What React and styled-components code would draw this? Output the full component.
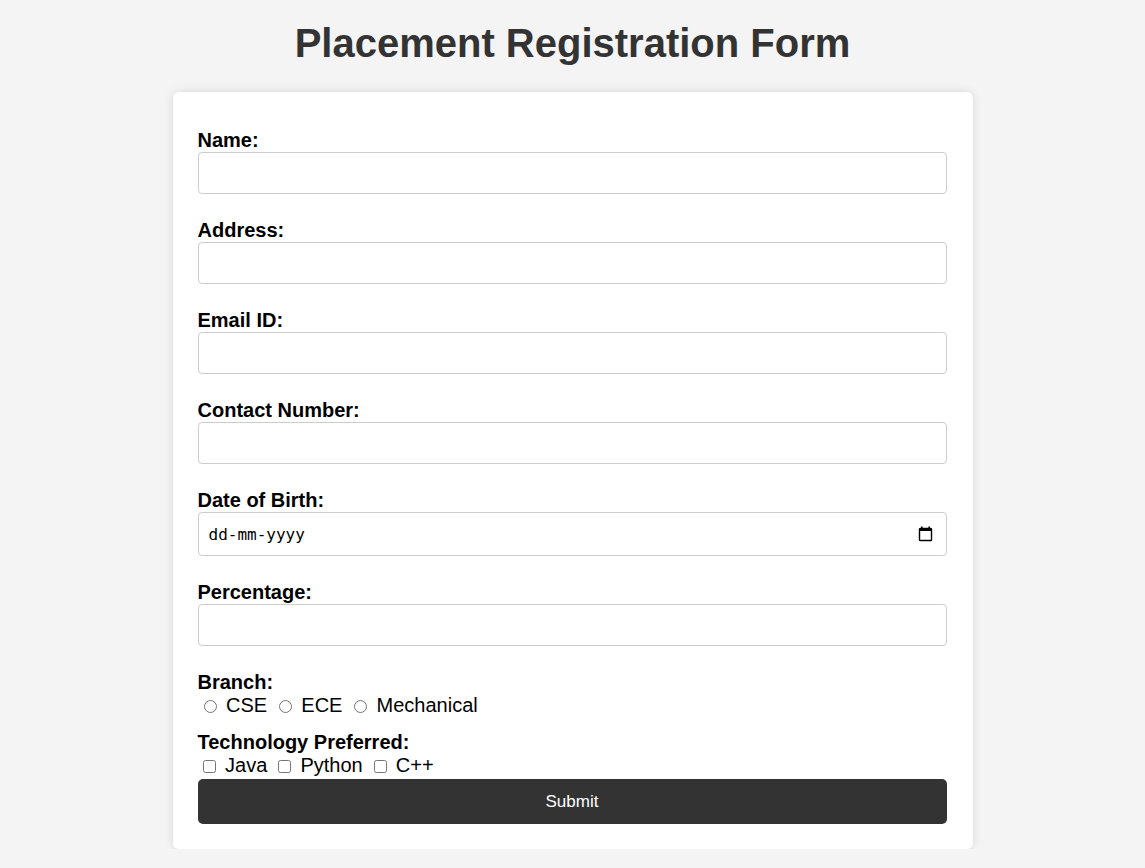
import React from 'react'
import styled, { createGlobalStyle } from 'styled-components'

const GlobalStyle = createGlobalStyle`
body{
  margin:0;
  background-color:#f4f4f4;
  font-family:"Liberation Sans", Arial, sans-serif;
}
`

const Title = styled.h1`
margin:20px 0 26px;
text-align:center;
font-size:40px;
line-height:46px;
font-weight:bold;
color:#333;
`

const Card = styled.form`
display:flex;
flex-direction:column;
width:800px;
box-sizing:border-box;
margin:0 auto;
padding:25px 26px 25px 25px;
background-color:#fff;
border-radius:6px;
box-shadow:0 0 10px rgba(0,0,0,0.12);
`

const Label = styled.label`
display:block;
margin:12px 0 0;
font-size:20px;
line-height:23px;
font-weight:bold;
color:#000;
`

const Input = styled.input`
display:block;
width:100%;
height:42px;
box-sizing:border-box;
margin:0 0 13px;
padding:10px;
border:1px solid #ccc;
border-radius:4px;
font-family:"Liberation Sans", Arial, sans-serif;
font-size:17px;
outline:none;
`

const DateField = styled.div`
display:flex;
align-items:center;
height:44px;
box-sizing:border-box;
margin:0 0 13px;
padding:0 13px 0 10px;
border:1px solid #ccc;
border-radius:4px;
background:#fff;
input{
  flex:1;
  border:none;
  outline:none;
  padding:0;
  font-family:"DejaVu Sans Mono", monospace;
  font-size:16px;
  color:#000;
  &::placeholder{ color:#000; }
}
`

const Options = styled.div`
font-size:20px;
line-height:23px;
height:23px;
margin-bottom:2px;
color:#000;
white-space:pre;
input{
  width:13px;
  height:13px;
  margin:3px ${p => (p.$check ? '3.5px' : '4px')} 0 ${p => (p.$check ? '5.5px' : '6px')};
  vertical-align:-1px;
}
`

const Button = styled.button`
display:block;
width:100%;
height:45px;
border:none;
border-radius:5px;
background-color:#333;
color:#fff;
font-family:"Liberation Sans", Arial, sans-serif;
font-size:17px;
cursor:pointer;
`

const CalendarIcon = () => (
  <svg width="15" height="16" viewBox="0 0 15 16">
    <rect x="3" y="0.5" width="1.6" height="3" fill="#000" />
    <rect x="10.4" y="0.5" width="1.6" height="3" fill="#000" />
    <rect x="1.5" y="2.5" width="12" height="12" fill="none" stroke="#000" strokeWidth="1.4" rx="0.8" />
    <rect x="1.5" y="2.5" width="12" height="2.5" fill="#000" />
  </svg>
)

const fields = ['Name', 'Address', 'Email ID', 'Contact Number']

const App = () => {
  return (
    <>
      <GlobalStyle />
      <Title>Placement Registration Form</Title>
      <Card onSubmit={e => e.preventDefault()}>
        {fields.map(f => (
          <React.Fragment key={f}>
            <Label>{f}:</Label>
            <Input type="text" />
          </React.Fragment>
        ))}
        <Label>Date of Birth:</Label>
        <DateField>
          <input type="text" placeholder="dd-mm-yyyy" />
          <CalendarIcon />
        </DateField>
        <Label>Percentage:</Label>
        <Input type="text" />
        <Label>Branch:</Label>
        <Options>
          <input type="radio" name="branch" /> CSE <input type="radio" name="branch" /> ECE <input type="radio" name="branch" /> Mechanical
        </Options>
        <Label>Technology Preferred:</Label>
        <Options $check>
          <input type="checkbox" /> Java <input type="checkbox" /> Python <input type="checkbox" /> C++
        </Options>
        <Button type="submit">Submit</Button>
      </Card>
    </>
  )
}

export default App
